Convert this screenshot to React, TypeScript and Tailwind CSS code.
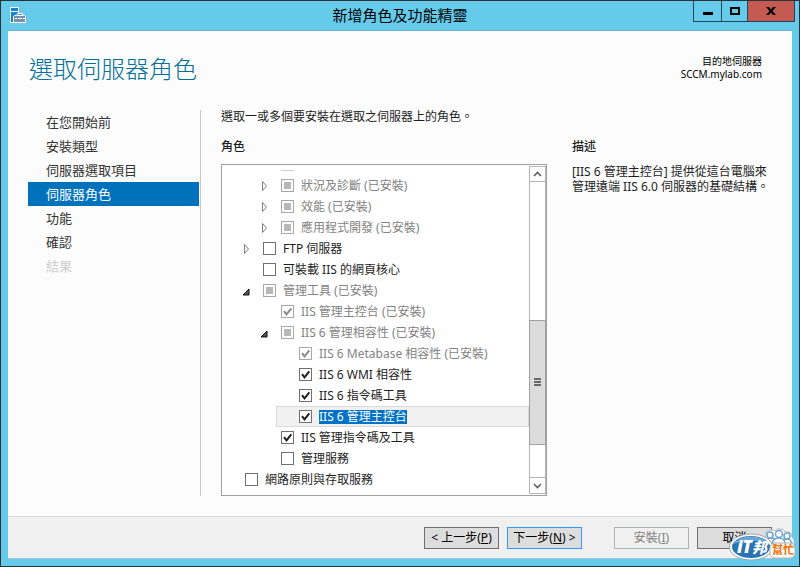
import { useState } from "react";

type Tri = "on" | "off" | "mixed";
type Arrow = "open" | "closed" | "none";

interface Role {
  id: string;
  text: string;
  level: 1 | 2 | 3 | 4;
  state: Tri;
  arrow: Arrow;
  installed?: boolean;
  selected?: boolean;
}

const indent = { 1: "ml-0", 2: "ml-[18px]", 3: "ml-[36px]", 4: "ml-[54px]" };

const roles: Role[] = [
  { id: "health", text: "狀況及診斷 (已安裝)", level: 3, state: "mixed", arrow: "closed", installed: true },
  { id: "perf", text: "效能 (已安裝)", level: 3, state: "mixed", arrow: "closed", installed: true },
  { id: "appdev", text: "應用程式開發 (已安裝)", level: 3, state: "mixed", arrow: "closed", installed: true },
  { id: "ftp", text: "FTP 伺服器", level: 2, state: "off", arrow: "closed" },
  { id: "core", text: "可裝載 IIS 的網頁核心", level: 2, state: "off", arrow: "none" },
  { id: "tools", text: "管理工具 (已安裝)", level: 2, state: "mixed", arrow: "open", installed: true },
  { id: "console", text: "IIS 管理主控台 (已安裝)", level: 3, state: "on", arrow: "none", installed: true },
  { id: "compat", text: "IIS 6 管理相容性 (已安裝)", level: 3, state: "mixed", arrow: "open", installed: true },
  { id: "metabase", text: "IIS 6 Metabase 相容性 (已安裝)", level: 4, state: "on", arrow: "none", installed: true },
  { id: "wmi", text: "IIS 6 WMI 相容性", level: 4, state: "on", arrow: "none" },
  { id: "script6", text: "IIS 6 指令碼工具", level: 4, state: "on", arrow: "none" },
  { id: "console6", text: "IIS 6 管理主控台", level: 4, state: "on", arrow: "none", selected: true },
  { id: "scripts", text: "IIS 管理指令碼及工具", level: 3, state: "on", arrow: "none" },
  { id: "service", text: "管理服務", level: 3, state: "off", arrow: "none" },
  { id: "npas", text: "網路原則與存取服務", level: 1, state: "off", arrow: "none" },
];

const steps = ["在您開始前", "安裝類型", "伺服器選取項目", "伺服器角色", "功能", "確認", "結果"];

function Expander({ kind }: { kind: Arrow }) {
  if (kind === "none") return <span className="w-[23px] shrink-0" />;
  return (
    <button type="button" aria-label={kind === "open" ? "摺疊" : "展開"} className="flex h-full w-[23px] shrink-0 items-center pl-[2px]">
      {kind === "open" ? (
        <svg width="8" height="12" viewBox="0 0 8 12">
          <path d="M7 4v6H1z" fill="#555" stroke="#111" />
        </svg>
      ) : (
        <svg width="8" height="12" viewBox="0 0 8 12">
          <path d="M2.500 1.500v9l4-4.500z" fill="#fff" stroke="#808080" />
        </svg>
      )}
    </button>
  );
}

function RoleRow({ role }: { role: Role }) {
  const [state, setState] = useState<Tri>(role.state);
  return (
    <li className={`${indent[role.level]} flex h-[21px] items-center border ${role.selected ? "border-[#d9d9d9] bg-[#f1f1f1]" : "border-transparent"}`}>
      <span className="-ml-px flex h-full">
        <Expander kind={role.arrow} />
      </span>
      <label className="flex items-center gap-[7px]">
        <span className="grid">
          <input
            type="checkbox"
            checked={state === "on"}
            disabled={role.installed}
            onChange={() => setState(state === "on" ? "off" : "on")}
            className="col-start-1 row-start-1 size-[13px] appearance-none border border-[#707070] bg-white disabled:border-[#a8a8a8]"
          />
          <svg width="13" height="13" viewBox="0 0 13 13" className="pointer-events-none col-start-1 row-start-1">
            {state === "on" && <path d="M3 6.2l2.5 3.2 4.8-6" fill="none" stroke={role.installed ? "#8a8a8a" : "#212121"} strokeWidth="2" />}
            {state === "mixed" && <path d="M3 3h7v7H3z" fill="#b8b8b8" />}
          </svg>
        </span>
        <span
          className={`whitespace-nowrap text-[12px] leading-[14px] ${
            role.selected ? "bg-[#0072c6] text-white" : role.installed ? "text-[#838383]" : "text-[#1e1e1e]"
          }`}
        >
          {role.text}
        </span>
      </label>
    </li>
  );
}

function ScrollBar() {
  return (
    <div className="my-px flex w-[17px] shrink-0 flex-col border-x border-[#b5b5b5] bg-white">
      <button type="button" aria-label="向上捲動" className="flex h-[16px] items-center justify-center border-y border-[#b5b5b5]">
        <svg width="9" height="6" viewBox="0 0 9 6">
          <path d="M1 5l3.5-3.5L8 5" fill="none" stroke="#606060" strokeWidth="1.6" />
        </svg>
      </button>
      <div className="grow-[139] basis-0" />
      <div className="-mx-px flex grow-[125] basis-0 flex-col items-center justify-center gap-px border border-[#a0a0a0] bg-[#dcdcdc]">
        <span className="h-[2px] w-[7px] bg-[#6a6a6a]" />
        <span className="h-[2px] w-[7px] bg-[#6a6a6a]" />
        <span className="h-[2px] w-[7px] bg-[#6a6a6a]" />
      </div>
      <div className="grow-[32] basis-0" />
      <button type="button" aria-label="向下捲動" className="flex h-[17px] items-center justify-center border-y border-[#b5b5b5]">
        <svg width="9" height="6" viewBox="0 0 9 6">
          <path d="M1 1l3.5 3.5L8 1" fill="none" stroke="#606060" strokeWidth="1.6" />
        </svg>
      </button>
    </div>
  );
}

function TitleBar() {
  return (
    <header className="grid h-[29px] grid-cols-[1fr_auto_1fr] items-start">
      <svg width="18" height="18" viewBox="0 0 18 18" className="mt-[5px] ml-[8px]">
        <path d="M1.500 1.500h8v15h-8z" fill="#1683cf" stroke="#fff" />
        <path d="M2 5.500h7" stroke="#fff" />
        <path d="M4.500 16.500v-6l1-1h2l1-2h5l1 2h1l1 1v6z" fill="#7890a8" stroke="#fff" />
        <path d="M8 9.500h6M6 12.500h2M9 12.500h4M14 12.500h2" fill="none" stroke="#fff" />
      </svg>
      <h1 className="text-[15px] leading-[28px] text-black">新增角色及功能精靈</h1>
      <div className="mr-[4px] flex h-[21px] justify-self-end border border-t-0 border-[#20465a]">
        <button type="button" aria-label="最小化" className="flex w-[27px] items-center justify-center">
          <span className="mt-[5px] h-[3px] w-[10px] bg-black" />
        </button>
        <button type="button" aria-label="最大化" className="flex w-[26px] items-center justify-center border-l border-[#20465a]">
          <span className="h-[8px] w-[10px] border-2 border-black" />
        </button>
        <button type="button" aria-label="關閉" className="flex w-[47px] items-center justify-center border-l border-[#20465a] bg-[#c35b53]">
          <svg width="10" height="8" viewBox="0 0 10 8">
            <path d="M0 0h3l2 2.500L7 0h3L6.500 4 10 8H7L5 5.500 3 8H0l3.500-4z" fill="#000" />
          </svg>
        </button>
      </div>
    </header>
  );
}

function Watermark() {
  return (
    <svg width="68" height="34" viewBox="0 0 68 34" className="pointer-events-none absolute right-[2px] bottom-[4px]">
      <g stroke="#a9b8c4" strokeWidth="1" fill="#fff">
        <path d="M34 15q-1-5 3-7q-1-6 5-6q3 0 4 1q2-3 6-2q3 0 4 3q7-1 7 5q3 2 2 8z" />
      </g>
      <g fill="#fff" stroke="#6fa3cc" strokeWidth="1.500">
        <path d="M36 15q1-5 6-5t5 5zM53 16q1-5 5-5t5 5z" />
        <circle cx="41" cy="7" r="3" />
        <circle cx="58" cy="8" r="3" />
        <path d="M43 16q1-6 7-6t6 6z" />
        <circle cx="50" cy="6" r="3.500" />
      </g>
      <ellipse cx="22" cy="19" rx="21.500" ry="13" fill="#fff" stroke="#9aa5ad" />
      <ellipse cx="22" cy="19" rx="19" ry="11" fill="#2b74b2" />
      <path d="M4 16q7-8 19-7.500T40 15Q21 10 4 16z" fill="#6ba6d3" />
      <text x="8" y="25" fontSize="17" fontWeight="900" fontStyle="italic" fill="#fff">
        iT
      </text>
      <text x="23" y="25" fontSize="15" fontWeight="900" fontStyle="italic" fill="#fff">
        邦
      </text>
      <rect x="41" y="15" width="25" height="15" rx="5" fill="#fff" stroke="#a9b0b5" />
      <text x="43" y="26" fontSize="11" fontWeight="900" fill="#ec7a1c">
        幫忙
      </text>
    </svg>
  );
}

const buttonBase = "h-[22px] w-[75px] border text-[12px] leading-[20px] whitespace-nowrap";

export default function App() {
  return (
    <div className="relative flex min-h-screen flex-col border border-[#2c3137] bg-[#66caea] font-['Noto_Sans','Noto_Sans_CJK_TC',sans-serif] text-[12px] text-[#1e1e1e]">
      <TitleBar />
      <main className="mx-[7px] mb-[7px] flex grow flex-col border-t border-[#6eaecb] bg-[#fcfcfc]">
        <div className="flex h-[79px] items-start justify-between pr-[30px] pl-[21px]">
          <h2 className="pt-[20px] text-[24px] leading-[36px] font-light text-[#00709a]">選取伺服器角色</h2>
          <div className="pt-[24px] text-right text-[10px] leading-[13px] text-black">
            <p>目的地伺服器</p>
            <p>SCCM.mylab.com</p>
          </div>
        </div>
        <div className="flex grow pr-[20px] pb-[20px] pl-[20px]">
          <nav className="w-[173px] shrink-0 border-r border-[#c8c8c8] pr-px">
            <ul>
              {steps.map((step, i) => (
                <li key={step}>
                  <a
                    href="#step"
                    aria-current={i === 3 ? "step" : undefined}
                    className={`block h-[24px] pl-[18px] text-[13px] leading-[24px] ${
                      i === 3 ? "bg-[#0072bc] text-white" : i === 6 ? "text-[#cdcdcd]" : "text-[#333]"
                    }`}
                  >
                    {step}
                  </a>
                </li>
              ))}
            </ul>
          </nav>
          <div className="flex grow flex-col pl-[20px]">
            <p className="leading-[14px]">選取一或多個要安裝在選取之伺服器上的角色。</p>
            <div className="flex grow gap-[25px] pt-[14px]">
              <section className="flex grow flex-col">
                <h3 className="pb-[8px] leading-[18px] font-medium">角色</h3>
                <div className="flex grow border border-[#a0a0a0] bg-white">
                  <ul className="grow pt-[5px]">
                    <li aria-hidden="true" className="ml-[59px] h-[5px] w-[13px] border-t border-[#cfcfcf]" />
                    {roles.map((role) => (
                      <RoleRow key={role.id} role={role} />
                    ))}
                  </ul>
                  <ScrollBar />
                </div>
              </section>
              <section className="w-[200px] shrink-0">
                <h3 className="pb-[8px] leading-[18px] font-medium">描述</h3>
                <p className="leading-[15px]">[IIS 6 管理主控台] 提供從這台電腦來管理遠端 IIS 6.0 伺服器的基礎結構。</p>
              </section>
            </div>
          </div>
        </div>
        <footer className="flex h-[43px] items-start justify-end gap-[8px] border-y border-t-[#dadada] border-b-[#a5c5d2] bg-[#f0f0f0] pt-[10px] pr-[20px]">
          <button type="button" className={`${buttonBase} border-[#707070] bg-[#dddddd] text-black`}>
            &lt; 上一步(<u>P</u>)
          </button>
          <button type="button" className={`${buttonBase} border-[#3399ff] bg-[#dddddd] text-black`}>
            下一步(<u>N</u>) &gt;
          </button>
          <button type="button" disabled className={`${buttonBase} ml-[24px] border-[#adb2b5] bg-[#f0f0f0] text-[#838383]`}>
            安裝(<u>I</u>)
          </button>
          <button type="button" className={`${buttonBase} border-[#707070] bg-[#dddddd] text-black`}>
            取消
          </button>
        </footer>
      </main>
      <Watermark />
    </div>
  );
}
